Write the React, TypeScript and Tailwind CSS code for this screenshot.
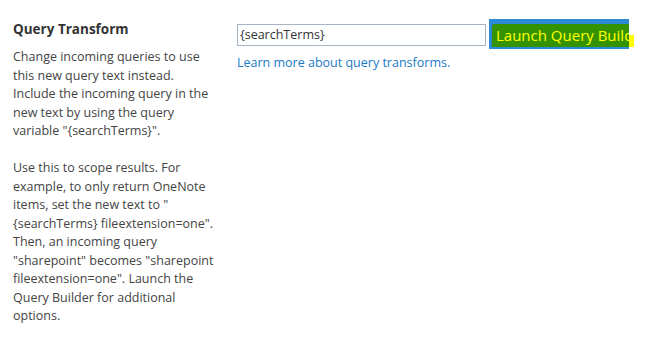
export default function App() {
  return (
    <div className="flex h-[352px] w-[657px] bg-white pt-[18px] font-['Open_Sans',sans-serif] text-[#444]">
      {/* Left description */}
      <div className="w-[224px] shrink-0 pl-[13px] pr-[10px] pt-[2px]">
        <h3 className="text-[13.5px] font-bold leading-[18px] text-[#333]">Query Transform</h3>
        <p className="mt-[10px] text-[12.5px] leading-[18.5px]">
          Change incoming queries to use this new query text instead. Include the incoming query in the new text by
          using the query variable "{"{searchTerms}"}".
        </p>
        <p className="mt-[18.5px] text-[12.5px] leading-[18.5px]">
          Use this to scope results. For example, to only return OneNote items, set the new text to "
          {"{searchTerms}"} fileextension=one". Then, an incoming query "sharepoint" becomes "sharepoint
          fileextension=one". Launch the Query Builder for additional options.
        </p>
      </div>

      {/* Right controls */}
      <div className="flex flex-col pl-[13px]">
        <div className="flex items-start">
          <div className="mt-[6px] flex h-[22px] w-[249px] items-center border border-[#a6b4c4] px-[2px] text-[12.5px] text-[#333]">
            {"{searchTerms}"}
          </div>
          <div className="relative ml-[3px] mt-[1px] flex h-[30px] w-[140px] items-start bg-[#2b8ad6]">
            <div className="ml-[3px] mt-[5px] flex h-[23px] w-[137px] items-center overflow-hidden rounded-tl-[3px] bg-[#359301] pl-[4px]">
              <span className="whitespace-nowrap text-[15px] leading-none text-[#ffff00]">Launch Query Builder</span>
            </div>
            <div className="absolute left-[140px] top-[16px] h-[12px] w-[5px] bg-[#ffff00]" />
          </div>
        </div>
        <a href="#" className="mt-[5px] text-[12.5px] leading-[18px] text-[#1a7ac5]">
          Learn more about query transforms.
        </a>
      </div>
    </div>
  );
}
